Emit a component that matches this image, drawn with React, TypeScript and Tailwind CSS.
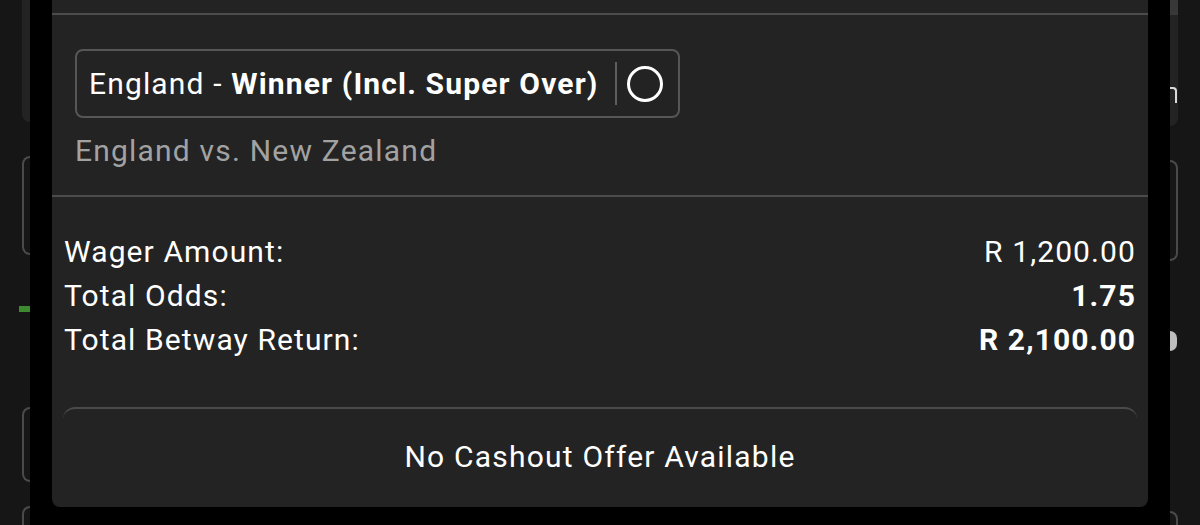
import { useMemo } from "react";

const rows = [
  { label: "Wager Amount:", value: "R 1,200.00", bold: false },
  { label: "Total Odds:", value: "1.75", bold: true },
  { label: "Total Betway Return:", value: "R 2,100.00", bold: true },
];

function LeftEdge() {
  return (
    <div className="flex h-full w-[30px] shrink-0 flex-col bg-[#161616]">
      <div className="ml-[22px] h-[126px] rounded-bl-lg bg-[#232323]" />
      <div className="ml-[22px] mt-[34px] h-[102px] rounded-l-lg border-2 border-r-0 border-[#4a4a4a]" />
      <div className="ml-[19px] mt-[51px] h-[6px] w-[11px] bg-[#3d8b2f]" />
      <div className="ml-[22px] mt-[95px] h-[77px] rounded-l-lg border-2 border-r-0 border-[#4a4a4a]" />
      <div className="ml-[22px] mt-[24px] h-[20px] rounded-tl-lg border-2 border-b-0 border-r-0 border-[#4a4a4a]" />
    </div>
  );
}

function RightEdge() {
  return (
    <div className="flex h-full w-[30px] shrink-0 flex-col bg-[#161616]">
      <div className="flex h-[126px] w-[8px] flex-col rounded-br-lg bg-[#232323]">
        <div className="h-[15px] bg-[#383838]" />
        <div className="mt-[72px] h-[16px] w-[7px] rounded-tr-sm border-r-2 border-t-2 border-[#d8d8d8]" />
      </div>
      <div className="mt-[34px] h-[102px] w-[8px] rounded-r-lg border-2 border-l-0 border-[#4a4a4a]" />
      <div className="mt-[70px] h-[20px] w-[7px] rounded-r-full bg-[#bdbdbd]" />
      <div className="mt-[160px] h-[14px] w-[8px] rounded-tr-lg border-2 border-b-0 border-l-0 border-[#4a4a4a]" />
    </div>
  );
}

export default function App() {
  const font = useMemo(() => "font-['Roboto','Liberation_Sans',sans-serif]", []);
  return (
    <div className={`flex h-[525px] w-[1200px] overflow-hidden bg-black text-white ${font}`}>
      <LeftEdge />
      <div className="w-[22px] shrink-0" />
      <main className="flex h-[507px] w-[1096px] shrink-0 flex-col rounded-b-lg bg-[#232323]">
        <div className="h-[13px]" />
        <div className="h-[2px] bg-[#4c4c4c]" />

        <section className="px-[23px] pt-[34px]">
          <div className="flex h-[69px] w-[605px] items-center rounded-lg border-2 border-[#565656] pl-[12px] pr-[15px]">
            <span className="whitespace-nowrap text-[30px] leading-none tracking-[1.15px]">
              England - <b className="font-bold">Winner (Incl. Super Over)</b>
            </span>
            <span className="ml-auto h-[43px] w-[2px] bg-[#5e5e5e]" />
            <span className="ml-[10px] h-[36px] w-[36px] rounded-full border-[3px] border-white" />
          </div>
          <p className="mt-[16px] text-[30px] leading-[34px] tracking-[1.2px] text-[#a2a2a2]">
            England vs. New Zealand
          </p>
        </section>

        <div className="mt-[27px] h-[2px] bg-[#4c4c4c]" />

        <section className="px-[12px] pt-[33px]">
          {rows.map((r) => (
            <div
              key={r.label}
              className="flex h-[44px] items-center justify-between text-[30px] leading-[44px] tracking-[1.1px]"
            >
              <span>{r.label}</span>
              <span className={r.bold ? "font-bold" : ""}>{r.value}</span>
            </div>
          ))}
        </section>

        <div className="mx-[11px] mt-auto flex h-[100px] items-center justify-center rounded-t-xl border-t-2 border-[#4a4a4a] pb-[4px] text-[30px] tracking-[1.2px]">
          No Cashout Offer Available
        </div>
      </main>
      <div className="w-[22px] shrink-0" />
      <RightEdge />
    </div>
  );
}
